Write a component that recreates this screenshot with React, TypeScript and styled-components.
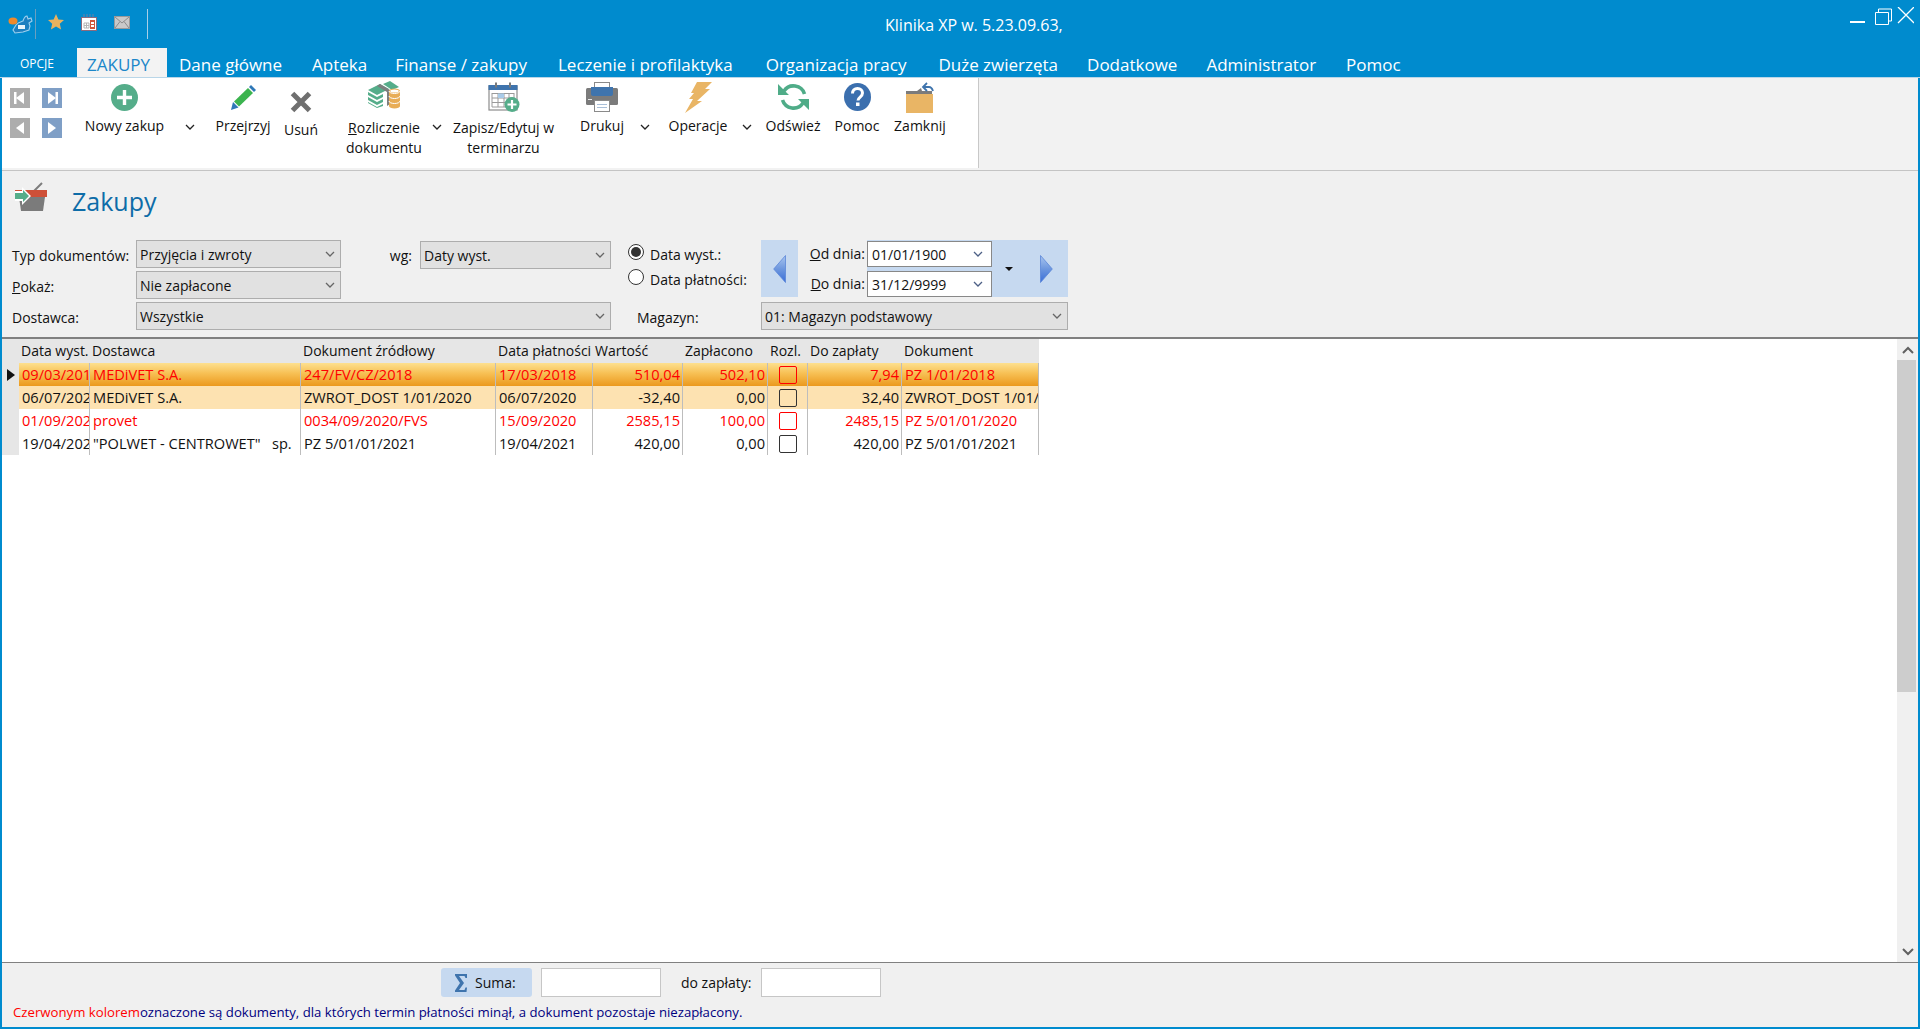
import styled, { createGlobalStyle } from 'styled-components';

const GlobalStyle = createGlobalStyle`
  html, body {
    margin: 0;
    padding: 0;
    height: 100%;
    overflow: hidden;
  }
  #root {
    height: 100%;
  }
  * {
    box-sizing: border-box;
  }
`;

const FONT = `"Open Sans", "Noto Sans", sans-serif`;

const tabs = [
  { label: 'Dane główne', gap: 12 },
  { label: 'Apteka', gap: 30 },
  { label: 'Finanse / zakupy', gap: 28 },
  { label: 'Leczenie i profilaktyka', gap: 31 },
  { label: 'Organizacja pracy', gap: 33 },
  { label: 'Duże zwierzęta', gap: 32 },
  { label: 'Dodatkowe', gap: 29 },
  { label: 'Administrator', gap: 29 },
  { label: 'Pomoc', gap: 30 },
];

const columns = [
  { title: 'Data wyst.', width: 71, right: false },
  { title: 'Dostawca', width: 211, right: false },
  { title: 'Dokument źródłowy', width: 195, right: false },
  { title: 'Data płatności', width: 97, right: false },
  { title: 'Wartość', width: 90, right: true },
  { title: 'Zapłacono', width: 85, right: true },
  { title: 'Rozl.', width: 40, right: false },
  { title: 'Do zapłaty', width: 94, right: true },
  { title: 'Dokument', width: 137, right: false },
];

const rows = [
  { tone: 'selected', red: true, cells: ['09/03/2018', 'MEDiVET S.A.', '247/FV/CZ/2018', '17/03/2018', '510,04', '502,10', '', '7,94', 'PZ 1/01/2018'] },
  { tone: 'active', red: false, cells: ['06/07/2020', 'MEDiVET S.A.', 'ZWROT_DOST 1/01/2020', '06/07/2020', '-32,40', '0,00', '', '32,40', 'ZWROT_DOST 1/01/2020'] },
  { tone: 'plain', red: true, cells: ['01/09/2020', 'provet', '0034/09/2020/FVS', '15/09/2020', '2585,15', '100,00', '', '2485,15', 'PZ 5/01/01/2020'] },
  { tone: 'plain', red: false, cells: ['19/04/2021', '"POLWET - CENTROWET"   sp.', 'PZ 5/01/01/2021', '19/04/2021', '420,00', '0,00', '', '420,00', 'PZ 5/01/01/2021'] },
];

function Chevron({ color = '#222' }: { color?: string }) {
  return (
    <svg width="10" height="6" viewBox="0 0 10 6">
      <path d="M1 1l4 4 4-4" fill="none" stroke={color} strokeWidth="1.3" />
    </svg>
  );
}

function LogoIcon() {
  return (
    <svg width="26" height="24" viewBox="0 0 26 24">
      <path d="M9 14c2-3 5-3 7-4 1-3 2-5 4-5l1 3 3-1 1 3-3 2 1 3-1 4-6 2-8 1-2-3z" fill="#1c7fc0" stroke="#9fd0ee" strokeWidth="1.1" />
      <ellipse cx="6" cy="10" rx="4.5" ry="3.5" fill="#ef8a2b" />
      <rect x="11" y="14" width="7" height="4" fill="#e8f4fb" />
    </svg>
  );
}

function StarIcon() {
  return (
    <svg width="18" height="18" viewBox="0 0 18 18">
      <path d="M9 1l2.4 5.4 5.6.6-4.2 3.8 1.3 5.7L9 13.6l-5.1 2.9 1.3-5.7L1 7l5.6-.6z" fill="#e9b25f" />
    </svg>
  );
}

function MiniCalendarIcon() {
  return (
    <svg width="16" height="17" viewBox="0 0 16 17">
      <rect x="0.5" y="3.5" width="15" height="13" fill="#fff" stroke="#8d6a7d" />
      <path d="M3 0v3M6 0v3M9 0v3M12 0v3" stroke="#6c7fa5" />
      <path d="M3 9h5v5H3zM5.5 9v5M3 11.5h5" fill="none" stroke="#b5b5b5" />
      <rect x="9" y="6" width="5" height="9" fill="#d1553c" />
      <path d="M10 8h3v2h-3zM10 11h3v2h-3z" fill="#fff" />
    </svg>
  );
}

function MailIcon() {
  return (
    <svg width="16" height="13" viewBox="0 0 16 13">
      <rect x="0.5" y="0.5" width="15" height="12" fill="#c9c9c9" stroke="#9a9a9a" />
      <path d="M1 1l7 6 7-6M1 12l5-6.5M15 12l-5-6.5" fill="none" stroke="#8c8c8c" />
    </svg>
  );
}

function PlusCircleIcon() {
  return (
    <svg width="27" height="27" viewBox="0 0 27 27">
      <circle cx="13.5" cy="13.5" r="13.5" fill="#55ad8a" />
      <path d="M13.5 6v15M6 13.5h15" stroke="#fff" strokeWidth="3.4" />
    </svg>
  );
}

function PencilIcon() {
  return (
    <svg width="25" height="25" viewBox="0 0 25 25">
      <path d="M0 25l2-8 5.5 5.5z" fill="#2f78b8" />
      <path d="M3 16.5L17 3l5 5-14 13.5z" fill="#3cb44f" />
      <path d="M18 2l2-2 5 5-2 2z" fill="#2f78b8" />
    </svg>
  );
}

function CrossIcon() {
  return (
    <svg width="22" height="22" viewBox="0 0 22 22">
      <path d="M2.5 2.5l17 17M19.5 2.5l-17 17" stroke="#6f6f6f" strokeWidth="5" />
    </svg>
  );
}

function MoneyIcon() {
  return (
    <svg width="33" height="28" viewBox="0 0 33 28">
      <path d="M0 9l12-6 9 5-12 6z" fill="#55ad8a" />
      <path d="M0 11l9 5 6-3v3l-6 3-9-5zM0 16l9 5 6-3v3l-6 3-9-5zM0 21l9 5 6-3v2l-6 2-9-5z" fill="#55ad8a" />
      <path d="M12 3l10 6v14l-3 2V11L9 5z" fill="#7d7d7d" />
      <path d="M15 3l7-3 9 6-7 3z" fill="#55ad8a" />
      <path d="M21 10a5.5 2.5 0 0 1 11 0v15a5.5 2.5 0 0 1-11 0z" fill="#e8ad57" />
      <path d="M21 10a5.5 2.5 0 0 0 11 0M21 15a5.5 2.5 0 0 0 11 0M21 20a5.5 2.5 0 0 0 11 0" fill="none" stroke="#fff" strokeWidth="1" />
      <ellipse cx="26.5" cy="10" rx="4.2" ry="1.5" fill="#fff" />
    </svg>
  );
}

function CalendarPlusIcon() {
  return (
    <svg width="32" height="30" viewBox="0 0 32 30">
      <rect x="1" y="4" width="28" height="24" fill="#fff" stroke="#8d8d8d" strokeWidth="1.2" />
      <rect x="0.5" y="3" width="29" height="5" fill="#3f74ad" />
      <rect x="7" y="0.5" width="2" height="5" fill="#7a7a7a" />
      <rect x="21" y="0.5" width="2" height="5" fill="#7a7a7a" />
      <path d="M4 11.5h22M4 16h22M4 20.5h16M4 25h14M4 11v14M10 11v14M16 11v14M21 11v9M26 11v6" fill="none" stroke="#9a9a9a" />
      <rect x="10" y="11.5" width="6" height="4.5" fill="#a9cbe8" />
      <circle cx="24" cy="22.5" r="7.5" fill="#55ad8a" />
      <path d="M24 18v9M19.5 22.5h9" stroke="#fff" strokeWidth="2.2" />
    </svg>
  );
}

function PrinterIcon() {
  return (
    <svg width="32" height="30" viewBox="0 0 32 30">
      <rect x="8.5" y="0.5" width="15" height="8" fill="#fff" stroke="#8a8a8a" />
      <rect x="0" y="6" width="32" height="17" rx="1.5" fill="#7b7b7b" />
      <path d="M5 5h22v7c0 1-1 2-2 2H7c-1 0-2-1-2-2z" fill="#3f74ad" />
      <rect x="2" y="17" width="4" height="1" fill="#e8e8e8" />
      <rect x="8.5" y="18.5" width="15" height="11" fill="#fff" stroke="#8a8a8a" />
      <path d="M11 22.5h10M11 25.5h10" stroke="#a9bfd8" />
    </svg>
  );
}

function BoltIcon() {
  return (
    <svg width="27" height="31" viewBox="0 0 27 31">
      <path d="M12 0h15l-7 7h5L12 19h5L0 31l8-14H4l5-6H6z" fill="#e9b565" />
    </svg>
  );
}

function RefreshIcon() {
  return (
    <svg width="31" height="28" viewBox="0 0 31 28">
      <path d="M6 8A11.5 11.5 0 0 1 26.5 11" fill="none" stroke="#4fac88" strokeWidth="3.6" />
      <path d="M25 20A11.5 11.5 0 0 1 4.5 17" fill="none" stroke="#4fac88" strokeWidth="3.6" />
      <path d="M0 1v11h11zM31 27V16H20z" fill="#4fac88" />
    </svg>
  );
}

function HelpIcon() {
  return (
    <svg width="27" height="28" viewBox="0 0 27 28">
      <ellipse cx="13.5" cy="14" rx="13.5" ry="14" fill="#3b6fae" />
      <path d="M8.5 10.5c0-3 2-5 5-5s5 2 5 4.5c0 4-4.5 4-4.5 7.5" fill="none" stroke="#fff" strokeWidth="3" />
      <rect x="12" y="19.5" width="3.5" height="3.5" fill="#fff" />
    </svg>
  );
}

function FolderIcon() {
  return (
    <svg width="30" height="31" viewBox="0 0 30 31">
      <path d="M1 9h11l4-3 1 3h10v3H1z" fill="#7b7b7b" />
      <rect x="1" y="12" width="27" height="19" fill="#e9b565" />
      <path d="M19 5h5c2 0 3 1 4 4" fill="none" stroke="#3f74ad" strokeWidth="1.8" />
      <path d="M22 1l-4 4 4 4" fill="none" stroke="#3f74ad" strokeWidth="1.8" />
    </svg>
  );
}

function BasketIcon() {
  return (
    <svg width="32" height="29" viewBox="0 0 32 29">
      <path d="M27 1L16 12" stroke="#7d7d7d" strokeWidth="2" />
      <rect x="0" y="8" width="32" height="7" fill="#ce5038" />
      <path d="M4 15h26l-2 14H6z" fill="#7b7b7b" />
      <path d="M0 9h7V5l9 9-9 9v-4H0z" fill="#fff" />
      <path d="M0 11h8V8l6 6-6 6v-3H0z" fill="#55ad8a" />
    </svg>
  );
}

function SigmaIcon() {
  return (
    <svg width="14" height="18" viewBox="0 0 14 18">
      <path d="M1 0h12v4h-1.5l-1-2H5l5 7-5 7h5.5l1-2.5H13L12.5 18H1v-1.5L6 9 1 1.5z" fill="#3f74ad" />
    </svg>
  );
}

function NavIcon({ dir, edge }: { dir: 'left' | 'right'; edge?: boolean }) {
  return (
    <svg width="20" height="20" viewBox="0 0 20 20">
      {dir === 'left' ? (
        <path d="M14 4v12L6 10z" fill="#fff" />
      ) : (
        <path d="M6 4v12l8-6z" fill="#fff" />
      )}
      {edge && dir === 'left' && <rect x="4" y="4" width="2.5" height="12" fill="#fff" />}
      {edge && dir === 'right' && <rect x="13.5" y="4" width="2.5" height="12" fill="#fff" />}
    </svg>
  );
}

function ArrowButton({ dir }: { dir: 'left' | 'right' }) {
  const id = `arrow-${dir}`;
  return (
    <svg width="13" height="28" viewBox="0 0 13 28">
      <defs>
        <linearGradient id={id} x1="0" y1="0" x2="0" y2="1">
          <stop offset="0" stopColor="#a9c5ef" />
          <stop offset="0.5" stopColor="#6d97de" />
          <stop offset="1" stopColor="#3a6ed8" />
        </linearGradient>
      </defs>
      {dir === 'left' ? (
        <path d="M12.5 0.5v27L0.7 14z" fill={`url(#${id})`} stroke="#5b86d8" strokeWidth="0.8" />
      ) : (
        <path d="M0.5 0.5v27L12.3 14z" fill={`url(#${id})`} stroke="#5b86d8" strokeWidth="0.8" />
      )}
    </svg>
  );
}

function SelectField({ value }: { value: string }) {
  return (
    <Select>
      <span>{value}</span>
      <Chevron color="#666" />
    </Select>
  );
}

export default function App() {
  return (
    <Window>
      <GlobalStyle />
      <TitleBar>
        <QuickAccess>
          <LogoBox><LogoIcon /></LogoBox>
          <QuickDivider $tone="#6a9fc0" />
          <QuickIcons>
            <QuickIcon><StarIcon /></QuickIcon>
            <QuickIcon><MiniCalendarIcon /></QuickIcon>
            <QuickIcon><MailIcon /></QuickIcon>
          </QuickIcons>
          <QuickDivider $tone="#a8cfe8" />
        </QuickAccess>
        <AppTitle>Klinika XP w. 5.23.09.63,</AppTitle>
        <WindowControls>
          <svg width="64" height="18" viewBox="0 0 64 18">
            <rect x="0" y="14" width="15" height="2" fill="#fff" />
            <path d="M25.5 5.5h13v12h-13zM28.5 5.5V2h13v12h-3" fill="none" stroke="#fff" />
            <path d="M48 0l16 16M64 0L48 16" fill="none" stroke="#fff" strokeWidth="1.3" />
          </svg>
        </WindowControls>
      </TitleBar>

      <TabRow>
        <OptionsTab>OPCJE</OptionsTab>
        <ActiveTab>ZAKUPY</ActiveTab>
        {tabs.map((tab) => (
          <Tab key={tab.label} $gap={tab.gap}>{tab.label}</Tab>
        ))}
      </TabRow>

      <Ribbon>
        <RibbonGroup>
          <NavGrid>
            <NavButton $enabled={false}><NavIcon dir="left" edge /></NavButton>
            <NavButton $enabled><NavIcon dir="right" edge /></NavButton>
            <NavButton $enabled={false}><NavIcon dir="left" /></NavButton>
            <NavButton $enabled><NavIcon dir="right" /></NavButton>
          </NavGrid>
          <RibbonButton $width={81}>
            <IconSlot><PlusCircleIcon /></IconSlot>
            <ButtonLabel>Nowy zakup</ButtonLabel>
          </RibbonButton>
          <Dropdown $width={50}><Chevron /></Dropdown>
          <RibbonButton $width={56}>
            <IconSlot><PencilIcon /></IconSlot>
            <ButtonLabel>Przejrzyj</ButtonLabel>
          </RibbonButton>
          <RibbonButton $width={60}>
            <IconSlot $top={5}><CrossIcon /></IconSlot>
            <ButtonLabel $top={4}>Usuń</ButtonLabel>
          </RibbonButton>
          <RibbonButton $width={76} $margin={15}>
            <IconSlot $top={-2}><MoneyIcon /></IconSlot>
            <ButtonLabel $top={2}><u>R</u>ozliczenie<br />dokumentu</ButtonLabel>
          </RibbonButton>
          <Dropdown $width={29}><Chevron /></Dropdown>
          <RibbonButton $width={105}>
            <IconSlot><CalendarPlusIcon /></IconSlot>
            <ButtonLabel $top={2}>Zapisz/Edytuj w<br />terminarzu</ButtonLabel>
          </RibbonButton>
          <RibbonButton $width={48} $margin={22}>
            <IconSlot><PrinterIcon /></IconSlot>
            <ButtonLabel>Drukuj</ButtonLabel>
          </RibbonButton>
          <Dropdown $width={38}><Chevron /></Dropdown>
          <RibbonButton $width={68}>
            <IconSlot><BoltIcon /></IconSlot>
            <ButtonLabel>Operacje</ButtonLabel>
          </RibbonButton>
          <Dropdown $width={30}><Chevron /></Dropdown>
          <RibbonButton $width={62}>
            <IconSlot><RefreshIcon /></IconSlot>
            <ButtonLabel>Odśwież</ButtonLabel>
          </RibbonButton>
          <RibbonButton $width={66}>
            <IconSlot><HelpIcon /></IconSlot>
            <ButtonLabel>Pomoc</ButtonLabel>
          </RibbonButton>
          <RibbonButton $width={60}>
            <IconSlot><FolderIcon /></IconSlot>
            <ButtonLabel>Zamknij</ButtonLabel>
          </RibbonButton>
        </RibbonGroup>
        <RibbonRest />
      </Ribbon>

      <Content>
        <PageHeader>
          <BasketIcon />
          <PageTitle>Zakupy</PageTitle>
        </PageHeader>

        <Filters>
          <FieldLabel>Typ dokumentów:</FieldLabel>
          <SelectField value="Przyjęcia i zwroty" />
          <FieldLabel $align="right"><span>w<u>g</u>:</span></FieldLabel>
          <SelectShift><SelectField value="Daty wyst." /></SelectShift>
          <Spacer />
          <RadioColumn>
            <RadioRow>
              <Radio $checked />
              <RadioText>Data wyst.:</RadioText>
            </RadioRow>
            <RadioRow>
              <Radio $checked={false} />
              <RadioText>Data płatności:</RadioText>
            </RadioRow>
          </RadioColumn>
          <DatePanel>
            <DateArrow $width={37}><ArrowButton dir="left" /></DateArrow>
            <DateFields>
              <DateRow>
                <DateLabel><span><u>O</u>d dnia:</span></DateLabel>
                <DateInput>
                  <span>01/01/1900</span>
                  <Chevron color="#4c5f85" />
                </DateInput>
              </DateRow>
              <DateRow>
                <DateLabel><span><u>D</u>o dnia:</span></DateLabel>
                <DateInput>
                  <span>31/12/9999</span>
                  <Chevron color="#4c5f85" />
                </DateInput>
              </DateRow>
            </DateFields>
            <DateMenu />
            <DateArrow $width={43}><ArrowButton dir="right" /></DateArrow>
          </DatePanel>

          <FieldLabel><span><u>P</u>okaż:</span></FieldLabel>
          <SelectField value="Nie zapłacone" />
          <RowGap />

          <FieldLabel>Dostawca:</FieldLabel>
          <WideField><SelectField value="Wszystkie" /></WideField>
          <Spacer />
          <MagazynLabel>Magazyn:</MagazynLabel>
          <SelectField value="01: Magazyn podstawowy" />
        </Filters>

        <GridFrame>
          <GridTable>
            <HeaderRow>
              <IndicatorCell />
              {columns.map((col) => (
                <HeaderCell key={col.title} $width={col.width}>{col.title}</HeaderCell>
              ))}
            </HeaderRow>
            {rows.map((row, index) => (
              <DataRow key={index} $tone={row.tone} $red={row.red}>
                <IndicatorCell>{index === 0 && <Pointer />}</IndicatorCell>
                {columns.map((col, colIndex) => (
                  <DataCell key={col.title} $width={col.width} $right={col.right} $center={colIndex === 6}>
                    {colIndex === 6 ? <CheckBox $red={row.red} /> : <span>{row.cells[colIndex]}</span>}
                  </DataCell>
                ))}
              </DataRow>
            ))}
          </GridTable>
          <Scrollbar>
            <ScrollArrow>
              <svg width="12" height="8" viewBox="0 0 12 8">
                <path d="M1 7l5-5 5 5" fill="none" stroke="#606060" strokeWidth="2" />
              </svg>
            </ScrollArrow>
            <ScrollThumb />
            <ScrollTrack />
            <ScrollArrow>
              <svg width="12" height="8" viewBox="0 0 12 8">
                <path d="M1 1l5 5 5-5" fill="none" stroke="#606060" strokeWidth="2" />
              </svg>
            </ScrollArrow>
          </Scrollbar>
        </GridFrame>

        <Footer>
          <SummaryRow>
            <SumButton>
              <SigmaIcon />
              <span>Suma:</span>
            </SumButton>
            <SumInput />
            <SumLabel>do zapłaty:</SumLabel>
            <SumInput />
          </SummaryRow>
          <Note>
            <NoteRed>Czerwonym kolorem</NoteRed>oznaczone są dokumenty, dla których termin płatności minął, a dokument pozostaje niezapłacony.
          </Note>
        </Footer>
      </Content>
    </Window>
  );
}

const Window = styled.div`
  height: 100vh;
  display: flex;
  flex-direction: column;
  background: #008bce;
  padding: 0 2px 2px;
  font-family: ${FONT};
  font-size: 14px;
  color: #111;
`;

const TitleBar = styled.div`
  height: 48px;
  margin: 0 -2px;
  display: flex;
  color: #fff;
`;

const QuickAccess = styled.div`
  width: 148px;
  display: flex;
  align-items: flex-start;
`;

const LogoBox = styled.div`
  width: 35px;
  padding: 11px 0 0 7px;
`;

const QuickDivider = styled.div<{ $tone: string }>`
  width: 1px;
  height: 30px;
  margin-top: 9px;
  background: ${(p) => p.$tone};
`;

const QuickIcons = styled.div`
  width: 111px;
  padding-left: 3px;
  display: flex;
`;

const QuickIcon = styled.div`
  width: 33px;
  height: 44px;
  display: flex;
  align-items: center;
  justify-content: center;
`;

const AppTitle = styled.div`
  flex: 1;
  padding: 15px 0 0 737px;
  font-size: 16px;
  line-height: 20px;
  white-space: nowrap;
`;

const WindowControls = styled.div`
  width: 70px;
  padding: 7px 6px 0 0;
  display: flex;
  justify-content: flex-end;
`;

const TabRow = styled.div`
  height: 30px;
  margin: 0 -2px;
  display: flex;
  align-items: stretch;
  border-bottom: 1px solid #b9d6e8;
`;

const OptionsTab = styled.div`
  width: 77px;
  padding: 6px 0 0 20px;
  font-size: 12px;
  line-height: 20px;
  color: #fff;
`;

const ActiveTab = styled.div`
  width: 90px;
  background: #f3f3f3;
  color: #1b87c9;
  font-size: 17px;
  line-height: 24px;
  padding: 5px 0 0 10px;
`;

const Tab = styled.div<{ $gap: number }>`
  margin-left: ${(p) => p.$gap}px;
  padding-top: 5px;
  font-size: 17px;
  line-height: 24px;
  color: #fff;
  white-space: nowrap;
`;

const Ribbon = styled.div`
  height: 93px;
  display: flex;
  border-bottom: 1px solid #c4c4c4;
  background: #f2f2f2;
`;

const RibbonGroup = styled.div`
  width: 977px;
  flex: none;
  padding-left: 8px;
  display: flex;
  align-items: flex-start;
  background: #fff;
  border-right: 1px solid #c8c8c8;
  height: 90px;
`;

const RibbonRest = styled.div`
  flex: 1;
`;

const NavGrid = styled.div`
  display: grid;
  grid-template-columns: 20px 20px;
  grid-auto-rows: 20px;
  gap: 10px 12px;
  margin: 10px 22px 0 0;
`;

const NavButton = styled.div<{ $enabled: boolean }>`
  background: ${(p) => (p.$enabled ? '#7f9fc6' : '#adadad')};
`;

const RibbonButton = styled.div<{ $width: number; $margin?: number }>`
  width: ${(p) => p.$width}px;
  margin-left: ${(p) => p.$margin ?? 0}px;
  flex: none;
  display: flex;
  flex-direction: column;
  align-items: center;
  padding-top: 3px;
`;

const IconSlot = styled.div<{ $top?: number }>`
  height: 32px;
  display: flex;
  align-items: center;
  justify-content: center;
  transform: translateY(${(p) => p.$top ?? 0}px);
`;

const ButtonLabel = styled.div<{ $top?: number }>`
  margin-top: ${(p) => 3 + (p.$top ?? 0)}px;
  line-height: 20px;
  text-align: center;
  white-space: nowrap;
`;

const Dropdown = styled.div<{ $width: number }>`
  width: ${(p) => p.$width}px;
  flex: none;
  padding-top: 46px;
  display: flex;
  justify-content: center;
`;

const Content = styled.div`
  flex: 1;
  display: flex;
  flex-direction: column;
  background: #f0f0f0;
  min-height: 0;
`;

const PageHeader = styled.div`
  height: 69px;
  padding: 11px 0 0 13px;
  display: flex;
  align-items: flex-start;
  gap: 25px;
`;

const PageTitle = styled.div`
  font-size: 25px;
  line-height: 38px;
  color: #0d6ca8;
`;

const Filters = styled.div`
  height: 99px;
  padding-left: 10px;
  display: grid;
  grid-template-columns: 124px 205px 79px 191px 18px 132px 307px;
  grid-template-rows: 28px 28px 28px;
  row-gap: 3px;
  align-content: start;
`;

const FieldLabel = styled.div<{ $align?: string }>`
  display: flex;
  align-items: center;
  justify-content: ${(p) => (p.$align === 'right' ? 'flex-end' : 'flex-start')};
  padding: 2px ${(p) => (p.$align === 'right' ? '8px' : '0')} 0 0;
  white-space: nowrap;
`;

const Select = styled.div`
  height: 28px;
  display: flex;
  align-items: center;
  justify-content: space-between;
  padding: 0 5px 0 3px;
  background: #e1e1e1;
  border: 1px solid #adadad;
  white-space: nowrap;
`;

const SelectShift = styled.div`
  margin-top: 1px;
`;

const WideField = styled.div`
  grid-column: 2 / 5;
`;

const Spacer = styled.div``;

const RowGap = styled.div`
  grid-column: 3 / 6;
`;

const RadioColumn = styled.div`
  grid-row: 1 / 3;
  grid-column: 6;
  padding-top: 4px;
  margin-left: -1px;
  display: flex;
  flex-direction: column;
  gap: 5px;
`;

const RadioRow = styled.div`
  display: flex;
  align-items: center;
  gap: 6px;
  height: 20px;
`;

const Radio = styled.div<{ $checked: boolean }>`
  width: 16px;
  height: 16px;
  border-radius: 50%;
  border: 1px solid #333;
  background: #fff;
  display: flex;
  align-items: center;
  justify-content: center;
  margin-top: -4px;

  &::after {
    content: '';
    width: 10px;
    height: 10px;
    border-radius: 50%;
    background: ${(p) => (p.$checked ? '#333' : 'transparent')};
  }
`;

const RadioText = styled.div`
  white-space: nowrap;
`;

const DatePanel = styled.div`
  grid-row: 1 / 3;
  grid-column: 7;
  height: 57px;
  display: flex;
  background: #c6d9f0;
`;

const DateArrow = styled.div<{ $width: number }>`
  width: ${(p) => p.$width}px;
  display: flex;
  align-items: center;
  justify-content: center;
`;

const DateFields = styled.div`
  width: 194px;
  background: linear-gradient(#f0f0f0, #f0f0f0) left / 69px 100% no-repeat;
  padding-top: 1px;
  display: flex;
  flex-direction: column;
  gap: 5px;
`;

const DateRow = styled.div`
  display: flex;
  height: 25px;
`;

const DateLabel = styled.div`
  width: 69px;
  padding-right: 2px;
  display: flex;
  align-items: center;
  justify-content: flex-end;
  white-space: nowrap;
`;

const DateInput = styled.div`
  width: 125px;
  height: 26px;
  display: flex;
  align-items: center;
  justify-content: space-between;
  padding: 0 8px 0 4px;
  background: #fff;
  border: 1px solid #888;
`;

const DateMenu = styled.div`
  width: 33px;
  display: flex;
  align-items: center;
  justify-content: center;

  &::after {
    content: '';
    border: 4px solid transparent;
    border-top: 4px solid #111;
    border-bottom: 0;
  }
`;

const MagazynLabel = styled.div`
  display: flex;
  align-items: center;
  padding: 2px 0 0 8px;
`;

const GridFrame = styled.div`
  height: 626px;
  display: flex;
  justify-content: space-between;
  background: #fff;
  border-top: 2px solid #808080;
  border-bottom: 1px solid #808080;
  margin-top: -2px;
`;

const GridTable = styled.div`
  display: flex;
  flex-direction: column;
`;

const HeaderRow = styled.div`
  height: 24px;
  display: flex;
  background: #e6e6e6;
`;

const IndicatorCell = styled.div`
  width: 17px;
  flex: none;
  background: #e6e6e6;
  display: flex;
  align-items: center;
  padding-left: 5px;
`;

const Pointer = styled.div`
  border: 6px solid transparent;
  border-left: 8px solid #111;
  border-right: 0;
`;

const HeaderCell = styled.div<{ $width: number }>`
  width: ${(p) => p.$width}px;
  flex: none;
  padding: 0 2px;
  line-height: 24px;
  white-space: nowrap;
  overflow: hidden;
`;

const toneBackground: Record<string, string> = {
  selected: 'linear-gradient(#fde08f, #f7c054 45%, #eb991e)',
  active: '#fde2b1',
  plain: '#fff',
};

const DataRow = styled.div<{ $tone: string; $red: boolean }>`
  height: 23px;
  display: flex;
  font-size: 14.6px;
  background: ${(p) => toneBackground[p.$tone]};
  color: ${(p) => (p.$red ? '#ff0000' : '#111')};
`;

const DataCell = styled.div<{ $width: number; $right: boolean; $center: boolean }>`
  width: ${(p) => p.$width}px;
  flex: none;
  padding: 0 2px 0 3px;
  line-height: 23px;
  white-space: pre;
  overflow: hidden;
  border-right: 1px solid #bdbdbd;
  display: flex;
  align-items: center;
  justify-content: ${(p) => (p.$center ? 'center' : p.$right ? 'flex-end' : 'flex-start')};
`;

const CheckBox = styled.div<{ $red: boolean }>`
  width: 18px;
  height: 18px;
  border: 1px solid ${(p) => (p.$red ? '#ff0000' : '#333')};
  border-radius: 2px;
`;

const Scrollbar = styled.div`
  width: 21px;
  display: flex;
  flex-direction: column;
  background: #f0f0f0;
`;

const ScrollArrow = styled.div`
  height: 21px;
  display: flex;
  align-items: center;
  justify-content: center;
`;

const ScrollThumb = styled.div`
  height: 332px;
  width: 19px;
  background: #cdcdcd;
`;

const ScrollTrack = styled.div`
  flex: 1;
`;

const Footer = styled.div`
  flex: 1;
  display: flex;
  flex-direction: column;
  padding: 5px 0 0 11px;
`;

const SummaryRow = styled.div`
  height: 29px;
  display: flex;
  padding-left: 428px;
`;

const SumButton = styled.div`
  width: 91px;
  display: flex;
  align-items: center;
  gap: 7px;
  padding-left: 13px;
  background: #c6d9f0;
  border-radius: 3px;
`;

const SumInput = styled.div`
  width: 120px;
  margin-left: 9px;
  background: #fff;
  border: 1px solid #c6c6c6;
`;

const SumLabel = styled.div`
  margin-left: 20px;
  display: flex;
  align-items: center;
`;

const Note = styled.div`
  margin-top: 5px;
  font-size: 13.2px;
  line-height: 20px;
  color: #000080;
  white-space: nowrap;
`;

const NoteRed = styled.span`
  color: #ff0000;
`;
